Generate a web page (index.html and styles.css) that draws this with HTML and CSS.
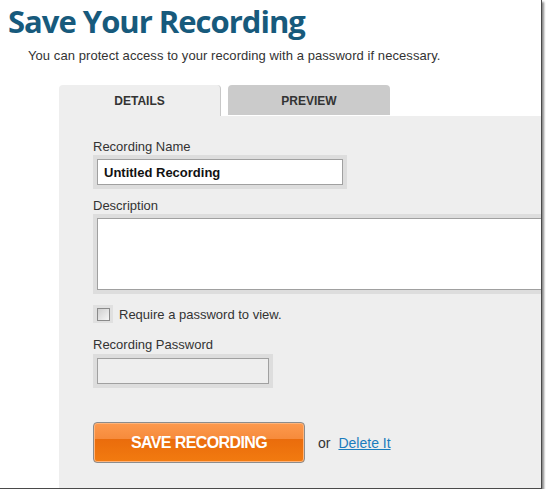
FILE: index.html
```html
<!DOCTYPE html>
<html lang="en">
<head>
  <meta charset="UTF-8">
  <title>Save Your Recording</title>
  <link rel="stylesheet" href="styles.css">
</head>
<body>
  <div class="frame">
    <h1 class="title">Save Your Recording</h1>
    <p class="intro">You can protect access to your recording with a password if necessary.</p>

    <div class="tabs">
      <div class="tab active">DETAILS</div>
      <div class="tab">PREVIEW</div>
    </div>

    <form class="panel">
      <label class="field-label">Recording Name</label>
      <div class="well name-well">
        <input type="text" class="name-input" value="Untitled Recording">
      </div>

      <label class="field-label desc-label">Description</label>
      <div class="well desc-well">
        <textarea class="desc-input"></textarea>
      </div>

      <label class="check-row">
        <span class="check-well"><span class="checkbox"></span></span>
        Require a password to view.
      </label>

      <label class="field-label pass-label">Recording Password</label>
      <div class="well pass-well">
        <input type="password" class="pass-input" disabled>
      </div>

      <div class="actions">
        <button type="button" class="save-btn">SAVE RECORDING</button>
        <span class="or">or</span>
        <a href="#" class="delete-link">Delete It</a>
      </div>
    </form>
  </div>
</body>
</html>
```

FILE: styles.css
```css
body { margin: 0; background: #fff; font-family: "Liberation Sans", Arial, sans-serif; color: #333; }
.frame { width: 541px; height: 488px; border-right: 1px solid #4a4a4a; border-bottom: 1px solid #4a4a4a; box-shadow: 2px 2px 2px #8a8a8a; display: flex; flex-direction: column; overflow: hidden; }
.title { margin: 0 0 0 8px; font-family: "Open Sans", sans-serif; font-size: 31px; font-weight: 700; color: #175a7c; line-height: 42px; letter-spacing: -1px; }
.intro { margin: 6px 0 0 28px; font-size: 13px; line-height: 16px; letter-spacing: 0.07px; color: #333; }
.tabs { display: flex; gap: 7px; margin: 21px 0 0 59px; }
.tab { width: 162px; height: 30px; line-height: 33px; text-align: center; font-size: 12px; font-weight: 700; color: #333; background: #cbcbcb; border-radius: 4px 4px 0 0; }
.tab.active { width: 161px; height: 31px; background: #eee; border-right: 1px solid #c8c8c8; }
.panel { flex: 1; margin-left: 59px; background: #eee; padding: 23px 0 0 34px; display: flex; flex-direction: column; align-items: flex-start; }
.field-label { font-size: 13px; line-height: 16px; color: #333; }
.well { background: #ddd; padding: 4px; box-sizing: border-box; }
.well input, .well textarea { display: block; box-sizing: border-box; border: 1px solid #a0a0a0; margin: 0; font-family: inherit; }
.name-well { width: 254px; height: 34px; }
.name-input { width: 246px; height: 26px; padding: 0 6px; font-size: 13px; font-weight: 700; color: #111; background: #fff; }
.desc-label { margin-top: 9px; }
.desc-well { width: 460px; height: 80px; padding-right: 0; }
.desc-input { width: 100%; height: 72px; background: #fff; resize: none; border-right: none; }
.check-row { margin-top: 11px; display: flex; align-items: center; gap: 6px; font-size: 13px; color: #333; }
.check-well { width: 20px; height: 18px; background: #e0e0e0; display: flex; align-items: center; justify-content: center; }
.checkbox { width: 11px; height: 11px; border: 1px solid #8a8a8a; background: linear-gradient(135deg, #cfcfcf, #f6f6f6); }
.pass-label { margin-top: 14px; }
.pass-well { margin-top: 1px; width: 180px; height: 34px; }
.pass-input { width: 172px; height: 26px; background: #eee; }
.actions { margin-top: 34px; display: flex; align-items: center; }
.save-btn { width: 212px; height: 41px; border: 1px solid #8c8c8c; border-radius: 4px; background: linear-gradient(#fd9a4e 0%, #f68b3c 40%, #ea6c0c 41%, #f27b10 100%); color: #fff; font-family: inherit; font-size: 16px; font-weight: 700; letter-spacing: -0.6px; box-shadow: inset 0 0 0 1px #ffb47a; cursor: pointer; }
.or { margin-left: 13px; font-size: 14px; color: #333; }
.delete-link { margin-left: 8px; font-size: 14px; color: #1b7cbd; text-decoration: underline; }
```
